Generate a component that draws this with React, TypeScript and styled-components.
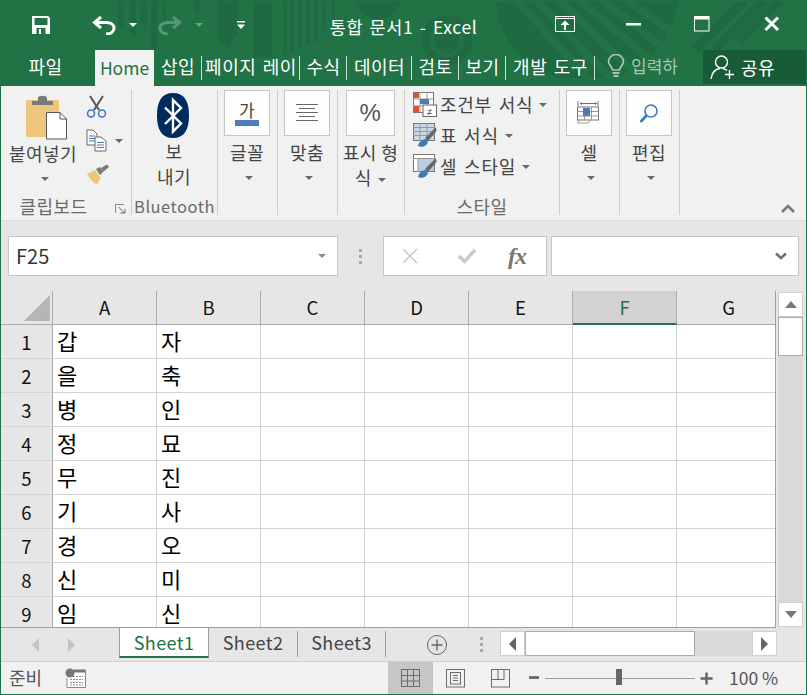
import React from "react";
import styled, { createGlobalStyle } from "styled-components";

const KR = `"Noto Sans CJK KR", "Noto Sans", sans-serif`;

const Global = createGlobalStyle`
  html, body { margin: 0; padding: 0; background: #fff; }
  * { box-sizing: border-box; }
`;

const Window = styled.div`
  width: 807px; height: 695px; border: 1px solid #217346; background: #e6e6e6;
  font-family: ${KR}; overflow: hidden; display: flex; flex-direction: column;
`;
const Header = styled.div`
  position: relative; height: 85px; background: #217346; flex: none;
`;
const Deco = styled.svg`
  position: absolute; left: -1px; top: -1px; pointer-events: none;
`;
const TitleBar = styled.div`
  position: relative; height: 49px; display: flex; align-items: center; color: #fff;
`;
const QuickSlot = styled.div<{ $w: number; $pl?: number }>`
  flex: none; width: ${p => p.$w}px; padding-left: ${p => p.$pl ?? 0}px; display: flex; align-items: center; justify-content: center;
`;
const Quick = styled.div`
  flex: none; width: 291px; display: flex; align-items: center; padding-bottom: 2px;
`;
const Title = styled.div`
  flex: 1; text-align: center; font-size: 17.5px; line-height: 24px; padding: 3px 0 0 0; letter-spacing: 0.6px; word-spacing: 2px; white-space: nowrap;
`;
const WinButtons = styled.div`
  flex: none; width: 291px; display: flex; align-items: center; padding-bottom: 3px;
`;
const TabRow = styled.div`
  position: relative; height: 36px; display: flex; align-items: stretch; color: #fff; font-size: 18px; line-height: 32px; letter-spacing: 0.5px; word-spacing: 2px;
`;
const Tab = styled.div<{ $w: number; $sep?: boolean; $pr?: number }>`
  flex: none; width: ${p => p.$w}px; padding-right: ${p => p.$pr ?? 0}px; white-space: nowrap; overflow: hidden; text-align: center; position: relative;
  ${p => p.$sep ? `&::after { content: ""; position: absolute; right: 0; top: 6px; height: 24px; width: 1px; background: #c9dccf; }` : ""}
`;
const HomeTab = styled.div`
  flex: none; width: 59px; background: #f1f1f1; color: #217346; text-align: center; font-size: 17.5px; line-height: 36px; letter-spacing: 0;
`;
const Tell = styled.div`
  flex: none; width: 108px; display: flex; align-items: center; gap: 6px; padding: 0 0 4px 12px; color: #a6c7b3; font-size: 17px; white-space: nowrap; letter-spacing: 0;
`;
const Share = styled.div`
  flex: none; width: 103px; height: 34px; background: #185c37; display: flex; align-items: center; gap: 5px; padding-left: 7px; font-size: 18px;
`;
const Ribbon = styled.div`
  height: 135px; flex: none; background: #f1f1f1; border-bottom: 1px solid #dcdcdc; padding-top: 4px; display: flex; align-items: flex-start;
`;
const Group = styled.div<{ $w: number }>`
  position: relative; flex: none; width: ${p => p.$w}px; height: 125px; border-right: 1px solid #cdcdcd;
  display: flex; flex-direction: column; align-items: center; color: #444; font-size: 18px; line-height: 25px; letter-spacing: 0.5px;
`;
const GroupBody = styled.div`
  flex: 1; display: flex; flex-direction: column; align-items: center; width: 100%; min-height: 0; padding-right: 1px;
`;
const GroupLabel = styled.div<{ $mr?: number; $fs?: number }>`
  flex: none; height: 24px; line-height: 24px; margin: 0 ${p => p.$mr ?? 0}px -3px 0; color: #6b6b6b; font-size: ${p => p.$fs ?? 18}px; white-space: nowrap;
`;
const BigBox = styled.div<{ $w?: number }>`
  flex: none; width: ${p => p.$w ?? 46}px; height: 46px; border: 1px solid #c6c6c6; background: #fdfdfd;
  display: flex; align-items: center; justify-content: center; margin-bottom: 4px;
`;
const BtnText = styled.div`
  white-space: nowrap; text-align: center;
`;
const CaretSlot = styled.div`
  height: 25px; padding-left: 4px; display: flex; align-items: center; justify-content: center;
`;
const Caret = styled.span<{ $c?: string; $m?: number }>`
  display: inline-block; width: 0; height: 0; margin-left: ${p => p.$m ?? 0}px; vertical-align: middle;
  border-left: 4px solid transparent; border-right: 4px solid transparent; border-top: 4px solid ${p => p.$c ?? "#6a6a6a"};
`;
const ClipBody = styled.div`
  flex: 1; width: 100%; display: flex; padding-left: 7px;
`;
const PasteCol = styled.div`
  flex: none; width: 70px; display: flex; flex-direction: column; align-items: center; padding-top: 5px;
`;
const PasteIcon = styled.svg`
  flex: none; margin: 0 0 1px 7px;
`;
const SmallCol = styled.div`
  flex: none; display: flex; flex-direction: column; padding: 5px 0 0 8px; gap: 11px;
`;
const SmallRow = styled.div`
  display: flex; align-items: center; gap: 8px; height: 23px;
`;
const Launcher = styled.svg`
  position: absolute; right: 5px; bottom: 1px;
`;
const BtIcon = styled.svg`
  flex: none; margin: 3px 2px 1px 0;
`;
const StyleBody = styled.div`
  flex: 1; width: 100%; display: flex; flex-direction: column; padding-left: 8px; margin-top: -1px;
`;
const StyleRow = styled.div`
  height: 31px; display: flex; align-items: center; gap: 3px; white-space: nowrap; color: #444; letter-spacing: 0.75px; word-spacing: 2px;
`;
const RowCaret = styled(Caret)`
  margin-left: 3px;
`;
const RibbonEnd = styled.div`
  flex: 1; height: 125px; display: flex; align-items: flex-end; justify-content: flex-end; padding: 0 11px 2px 0;
`;
const FormulaRow = styled.div`
  height: 70px; flex: none; padding: 15px 6px 15px 7px; display: flex; align-items: stretch;
`;
const FieldBox = styled.div<{ $w: number; $ml?: number }>`
  flex: none; width: ${p => p.$w}px; margin-left: ${p => p.$ml ?? 0}px; background: #fff; border: 1px solid #c6c6c6;
  display: flex; align-items: center; justify-content: space-between;
`;
const NameText = styled.div`
  color: #333; font-size: 20px; padding-left: 7px; line-height: 40px;
`;
const FieldEnd = styled.div`
  padding-right: 11px; display: flex; align-items: center;
`;
const Dots = styled.div`
  flex: none; width: 45px; display: flex; flex-direction: column; align-items: center; justify-content: center; gap: 3px;
`;
const Dot = styled.span`
  width: 3px; height: 3px; background: #a9a9a9; display: block;
`;
const FxGroup = styled.div`
  display: flex; width: 100%; align-items: center; padding-left: 17px; gap: 38px;
`;
const Fx = styled.span`
  font-family: "Liberation Serif", serif; font-style: italic; font-weight: bold; color: #777; font-size: 24px; line-height: 24px; margin-left: -7px; letter-spacing: -1px;
`;
const SheetArea = styled.div`
  height: 336px; flex: none; display: flex;
`;
const GridWrap = styled.div`
  width: 775px; flex: none; overflow: hidden; border-right: 1px solid #9f9f9f; background: #fff;
`;
const Grid = styled.div`
  width: 780px; display: grid; grid-template-columns: 52px repeat(7, 104px); grid-auto-rows: 34px;
`;
const Corner = styled.div`
  background: #e6e6e6; border-right: 1px solid #ababab; border-bottom: 1px solid #ababab; display: flex; align-items: flex-end; justify-content: flex-end; padding: 0 2px 3px 0;
`;
const ColHead = styled.div<{ $active?: boolean }>`
  background: ${p => p.$active ? "#d2d2d2" : "#e6e6e6"};
  color: ${p => p.$active ? "#217346" : "#111"};
  border-right: 1px solid #ababab;
  border-bottom: ${p => p.$active ? "2px solid #217346" : "1px solid #ababab"};
  text-align: center; font-size: 18.5px; line-height: 32px;
`;
const RowHead = styled.div`
  background: #e6e6e6; border-right: 1px solid #ababab; border-bottom: 1px solid #d4d4d4; color: #111; text-align: center; font-size: 18.5px; line-height: 35px;
`;
const Cell = styled.div`
  background: #fff; border-right: 1px solid #d4d4d4; border-bottom: 1px solid #d4d4d4; color: #000; font-size: 22px; line-height: 30px; padding-left: 4px;
`;
const VScroll = styled.div`
  width: 30px; flex: none; padding: 1px 0 0 2px; display: flex; flex-direction: column;
`;
const ScrollBtn = styled.div`
  flex: none; width: 25px; height: 25px; background: #fff; border: 1px solid #cfcfcf; display: flex; align-items: center; justify-content: center;
`;
const VTrack = styled.div`
  flex: 1; width: 25px; background: #d9d9d9;
`;
const VThumb = styled.div`
  width: 25px; height: 39px; background: #fff; border: 1px solid #ababab;
`;
const TabBar = styled.div`
  height: 34px; flex: none; border-top: 1px solid #9f9f9f; display: flex; align-items: flex-start; width: 775px;
`;
const NavArea = styled.div`
  flex: none; width: 118px; height: 33px; display: flex; align-items: center; gap: 27px; padding: 0 0 0 30px;
`;
const SheetTab = styled.div<{ $active?: boolean; $w: number }>`
  flex: none; width: ${p => p.$w}px; height: ${p => p.$active ? 30 : 26}px; margin-top: ${p => p.$active ? 0 : 3}px;
  background: ${p => p.$active ? "#fff" : "transparent"};
  color: ${p => p.$active ? "#217346" : "#444"};
  border-left: ${p => p.$active ? "1px solid #9f9f9f" : "none"};
  border-right: 1px solid #9f9f9f;
  border-bottom: ${p => p.$active ? "2px solid #217346" : "none"};
  font-size: 18px; text-align: center; line-height: ${p => p.$active ? 28 : 22}px; letter-spacing: 0.4px;
`;
const AddSlot = styled.div`
  flex: none; width: 62px; height: 33px; display: flex; align-items: center; justify-content: flex-end;
`;
const DotSlot = styled.div`
  flex: none; width: 52px; height: 33px; padding-left: 14px; display: flex; flex-direction: column; align-items: center; justify-content: center; gap: 3px;
`;
const HScroll = styled.div`
  flex: none; width: 277px; height: 25px; margin-top: 3px; display: flex;
`;
const HThumb = styled.div`
  flex: none; width: 170px; height: 25px; background: #fff; border: 1px solid #ababab;
`;
const HTrack = styled.div`
  flex: 1; background: #d9d9d9;
`;
const Status = styled.div`
  height: 33px; flex: none; background: #f1f1f1; border-top: 1px solid #cfcfcf; display: flex; align-items: stretch; color: #555; font-size: 18px;
`;
const ReadyText = styled.div`
  flex: none; width: 64px; padding-left: 8px; line-height: 30px;
`;
const StatusIconSlot = styled.div<{ $w: number; $bg?: string }>`
  flex: none; width: ${p => p.$w}px; display: flex; align-items: center; justify-content: center; background: ${p => p.$bg ?? "transparent"};
`;
const StatusSpacer = styled.div`
  flex: none; width: 302px;
`;
const ZoomTrack = styled.div`
  flex: none; width: 150px; margin-left: 5px; position: relative; display: flex; align-items: center;
`;
const ZoomLine = styled.div`
  width: 100%; height: 1px; background: #9a9a9a;
`;
const ZoomThumb = styled.div`
  position: absolute; left: 71px; top: 7px; width: 6px; height: 16px; background: #666;
`;
const ZoomPct = styled.div`
  flex: none; margin-left: 15px; line-height: 31px; font-size: 17.5px; white-space: nowrap;
`;
const FontIcon = styled.div`
  width: 24px; display: flex; flex-direction: column; align-items: center;
`;
const FontGlyph = styled.div`
  font-size: 17px; line-height: 20px; color: #444;
`;
const FontBar = styled.div`
  width: 24px; height: 6px; background: #4a7eb8;
`;
const Percent = styled.span`
  font-family: "Liberation Sans", sans-serif; font-size: 24px; color: #555; line-height: 30px;
`;

const Icon = {
  Save: () => (<svg width="20" height="20" viewBox="0 0 20 20"><path d="M1 1h16l2 2v16H1z" fill="#fff"/><rect x="3.5" y="3" width="13" height="7" fill="#217346"/><path d="M5.5 13h9v6h-9z" fill="#217346"/><rect x="8" y="14" width="2" height="5" fill="#fff"/></svg>),
  Undo: () => (<svg width="24" height="20" viewBox="0 0 24 20"><path d="M9 2 L2.5 7.5 L9 13" fill="none" stroke="#fff" strokeWidth="3"/><path d="M3 7.5 H15 C25 8 24 19 14 19" fill="none" stroke="#fff" strokeWidth="3"/></svg>),
  Redo: () => (<svg width="24" height="20" viewBox="0 0 24 20" opacity="0.25"><path d="M15 2 L21.5 7.5 L15 13" fill="none" stroke="#fff" strokeWidth="3"/><path d="M21 7.5 H9 C-1 8 0 19 10 19" fill="none" stroke="#fff" strokeWidth="3"/></svg>),
  Custom: () => (<svg width="10" height="8" viewBox="0 0 10 8"><rect x="1" width="8" height="1.5" fill="#fff"/><path d="M1 3.5h8L5 8z" fill="#fff"/></svg>),
  Display: () => (<svg width="20" height="16" viewBox="0 0 20 16"><rect x="0.5" y="0.5" width="19" height="15" fill="none" stroke="#fff"/><line x1="0" y1="2.5" x2="20" y2="2.5" stroke="#fff"/><path d="M10 4.5 L14.5 9 H11 V14 H9 V9 H5.5z" fill="#fff"/></svg>),
  Min: () => (<svg width="16" height="4" viewBox="0 0 16 4"><rect width="15" height="2.5" y="1" fill="#fff"/></svg>),
  Max: () => (<svg width="16" height="16" viewBox="0 0 16 16"><rect x="0.5" y="0.5" width="14.5" height="14.5" fill="none" stroke="#fff"/><rect width="15" height="3.5" fill="#fff"/></svg>),
  Close: () => (<svg width="16" height="16" viewBox="0 0 16 16"><path d="M1.5 1.5 L14 14 M14 1.5 L1.5 14" stroke="#fff" strokeWidth="3"/></svg>),
  Bulb: () => (<svg width="18" height="24" viewBox="0 0 18 24" fill="none"><path d="M5.5 16 C5 12 1.5 11.5 1.5 7.5 A7.5 7 0 0 1 16.5 7.5 C16.5 11.5 13 12 12.5 16 Z" stroke="#a6c7b3" strokeWidth="1.6"/><rect x="5.5" y="18" width="7" height="2" fill="#a6c7b3"/><rect x="6.5" y="21" width="5" height="2" fill="#a6c7b3"/></svg>),
  User: () => (<svg width="26" height="26" viewBox="0 0 26 26" fill="none"><circle cx="11.5" cy="8" r="6" stroke="#fff" strokeWidth="1.4"/><path d="M1 25 C2 18 6 15 10 14.5" stroke="#fff" strokeWidth="1.4"/><path d="M13 14.5 C15 15 16 15.5 17 16.5" stroke="#fff" strokeWidth="1.4"/><path d="M19.5 16 V25 M15 20.5 H24" stroke="#fff" strokeWidth="1.4"/></svg>),
  Paste: () => (<PasteIcon width="43" height="45" viewBox="0 0 43 45"><rect x="1" y="5" width="33" height="37" rx="2" fill="#edc67b"/><path d="M7 10 V6 H13 V3 C13 0 22 0 22 3 V6 H28 V10z" fill="#7a7a7a"/><path d="M21.5 17.5 H35 L41.5 24 V44 H21.5z" fill="#fff" stroke="#555" strokeWidth="1"/><path d="M35 17.5 V24 H41.5" fill="none" stroke="#555"/></PasteIcon>),
  Scissors: () => (<svg width="21" height="23" viewBox="0 0 21 23" fill="none"><path d="M4 1 L13 15 M17 1 L8 15" stroke="#555" strokeWidth="2"/><circle cx="5" cy="18.5" r="3.5" stroke="#3d7ab8" strokeWidth="1.6"/><circle cx="16" cy="18.5" r="3.5" stroke="#3d7ab8" strokeWidth="1.6"/></svg>),
  Copy: () => (<svg width="21" height="23" viewBox="0 0 21 23" fill="none"><path d="M1 1 H7 L11 5 V16 H1z" fill="#fff" stroke="#666"/><path d="M3 7h6M3 9.5h6M3 12h6" stroke="#3d7ab8"/><path d="M9 8 H15 L20 12 V22 H9z" fill="#fff" stroke="#666"/><path d="M11 13.5h7M11 16h7M11 18.5h7" stroke="#3d7ab8"/></svg>),
  Brush: () => (<svg width="24" height="21" viewBox="0 0 24 21"><path d="M1 10 L9 6 L15 14 L11 20 C8 20 4 15 1 10z" fill="#edc67b"/><path d="M10 5 L14 3 L17 8 L14 11z" fill="#777"/><path d="M15 4 L21 0.5 L23 3 L17 8z" fill="#777"/></svg>),
  Launch: () => (<Launcher width="11" height="10" viewBox="0 0 11 10" fill="none"><path d="M0.5 9 V0.5 H9" stroke="#8a8a8a"/><path d="M3.5 3 L9.5 9 M5.5 9 H10 V5" stroke="#666"/></Launcher>),
  Bluetooth: () => (<BtIcon width="34" height="45" viewBox="0 0 34 45"><path d="M17 0 C28 0 33 8 33 22.5 C33 37 28 45 17 45 C6 45 1 37 1 22.5 C1 8 6 0 17 0z" fill="#002b5c"/><path d="M9 14.5 L25 30.5 L17 38.5 V7 L25 15 L9 31" fill="none" stroke="#fff" strokeWidth="2.4"/></BtIcon>),
  Font: () => (<FontIcon><FontGlyph>가</FontGlyph><FontBar /></FontIcon>),
  Align: () => (<svg width="24" height="20" viewBox="0 0 24 20"><path d="M1 1.5h22M4 5.5h16M1 9.5h22M4 13.5h16M1 17.5h22" stroke="#666" strokeWidth="1"/></svg>),
  Cond: () => (<svg width="24" height="25" viewBox="0 0 24 25"><rect x="0.5" y="0.5" width="20" height="20" fill="#fff" stroke="#777"/><path d="M7 0v20M14 0v20M0 7h20M0 14h20" stroke="#999"/><rect x="1" y="1" width="5" height="5" fill="#d8552f"/><rect x="7" y="7" width="9" height="5" fill="#4a7eb8"/><rect x="1" y="14" width="5" height="6" fill="#d8552f"/><rect x="10" y="13" width="13.5" height="11.5" fill="#fff" stroke="#666"/><text x="17" y="23" fontSize="9" fontFamily="Liberation Sans" textAnchor="middle" fill="#333">≠</text></svg>),
  Table: () => (<svg width="24" height="25" viewBox="0 0 24 25"><rect x="0.5" y="0.5" width="21" height="17" fill="#c7d6e6" stroke="#777"/><path d="M0 4.5h22M0 8.5h22M0 12.5h22M7 0v18M14 0v18" stroke="#999"/><path d="M23 4 L12 15 L15 18 L23.5 8z" fill="#666"/><path d="M5 23 C6 18 10 16 13 16 L15 19 C14 23 9 25 5 23z" fill="#3d7ab8"/></svg>),
  CellStyle: () => (<svg width="24" height="25" viewBox="0 0 24 25"><rect x="0.5" y="0.5" width="21" height="17" fill="#fff" stroke="#777"/><rect x="5" y="5" width="16" height="12" fill="#b9cde2"/><path d="M0 4.5h22M5 5v13" stroke="#999"/><path d="M23 4 L12 15 L15 18 L23.5 8z" fill="#666"/><path d="M5 23 C6 18 10 16 13 16 L15 19 C14 23 9 25 5 23z" fill="#3d7ab8"/></svg>),
  Cells: () => (<svg width="24" height="24" viewBox="0 0 24 24"><path d="M1 0v5M21 0v5M3 2.5h17" stroke="#3d7ab8" fill="none"/><path d="M3 2.5l2-1.5v3zM20 2.5l-2-1.5v3z" fill="#3d7ab8"/><rect x="0.5" y="6" width="21" height="13" fill="#fff" stroke="#777"/><path d="M0.5 10.5h21M0.5 15h21M7.5 6v13M14.5 6v13" stroke="#999"/><rect x="6" y="7" width="7" height="8" fill="#4a7eb8"/><path d="M1 19v3h10l3-3" stroke="#999" fill="none"/></svg>),
  Search: () => (<svg width="20" height="21" viewBox="0 0 20 21" fill="none"><circle cx="12" cy="8" r="6" stroke="#3d7ab8" strokeWidth="1.6"/><path d="M7.5 12.5 L1.5 19" stroke="#3d7ab8" strokeWidth="2.6"/></svg>),
  Chevron: () => (<svg width="14" height="9" viewBox="0 0 14 9"><path d="M1 8 L7 2 L13 8" fill="none" stroke="#777" strokeWidth="2.6"/></svg>),
  X: () => (<svg width="18" height="16" viewBox="0 0 18 16"><path d="M2 1 L16 15 M16 1 L2 15" stroke="#c9c9c9" strokeWidth="1.6"/></svg>),
  Check: () => (<svg width="20" height="16" viewBox="0 0 20 16"><path d="M2 8 L7.5 13.5 L18 2" fill="none" stroke="#c9c9c9" strokeWidth="3.4"/></svg>),
  DownFat: () => (<svg width="12" height="8" viewBox="0 0 12 8"><path d="M1 1.5 L6 6 L11 1.5" fill="none" stroke="#6f6f6f" strokeWidth="2.6"/></svg>),
  Tri: ({ d, c = "#777" }: { d: "l" | "r" | "u" | "d"; c?: string }) => {
    const p = { l: "M8 0 V14 L1 7z", r: "M1 0 V14 L8 7z", u: "M0 8 H12 L6 1z", d: "M0 1 H12 L6 8z" }[d];
    return d === "l" || d === "r"
      ? <svg width="9" height="14" viewBox="0 0 9 14"><path d={p} fill={c} /></svg>
      : <svg width="12" height="9" viewBox="0 0 12 9"><path d={p} fill={c} /></svg>;
  },
  Triangle: () => (<svg width="26" height="26" viewBox="0 0 26 26"><path d="M26 0 V26 H0z" fill="#b5b5b5"/></svg>),
  Add: () => (<svg width="22" height="22" viewBox="0 0 22 22" fill="none"><circle cx="11" cy="11" r="9.5" stroke="#666"/><path d="M11 5.5v11M5.5 11h11" stroke="#666" strokeWidth="1.4"/></svg>),
  Macro: () => (<svg width="21" height="20" viewBox="0 0 21 20"><path d="M9 2.5h11.5V19.5H2V10" fill="#fff" stroke="#888"/><circle cx="5" cy="5" r="4.5" fill="#777"/><rect x="8.5" y="1.5" width="12" height="3" fill="#777"/><path d="M5 8.5h13M5 11.5h13M5 14.5h13M5 17h13" stroke="#888" strokeDasharray="2 1"/></svg>),
  Normal: () => (<svg width="20" height="19" viewBox="0 0 20 19" fill="none"><rect x="0.5" y="0.5" width="18" height="17" stroke="#6c6c6c"/><path d="M0 6.5h19M0 12h19M6.5 0v18M12.5 0v18" stroke="#6c6c6c"/></svg>),
  Page: () => (<svg width="20" height="19" viewBox="0 0 20 19" fill="none"><rect x="0.5" y="0.5" width="18" height="17.5" stroke="#6c6c6c"/><rect x="4.5" y="3.5" width="10" height="11.5" stroke="#6c6c6c"/><path d="M7 6.5h5M7 9h5M7 11.5h5" stroke="#6c6c6c"/></svg>),
  Break: () => (<svg width="20" height="19" viewBox="0 0 20 19" fill="none"><rect x="0.5" y="0.5" width="18" height="17.5" stroke="#6c6c6c"/><path d="M0.5 10.5h12.5V0.5M7 0.5v10" stroke="#6c6c6c"/></svg>),
  Minus: () => (<svg width="12" height="4" viewBox="0 0 12 4"><rect width="11" height="3" fill="#666"/></svg>),
  Plus: () => (<svg width="15" height="15" viewBox="0 0 15 15"><path d="M7 1v13M0.5 7.5h13" stroke="#666" strokeWidth="2.6"/></svg>),
};

const Decoration = () => (
  <Deco width="807" height="86" viewBox="0 0 807 86">
    <g fill="#1f6a40">
      <path d="M118 0h6v28h-6zM130 0h6v36h-6zM140 0h7v25h-7zM151 0h6v50h-6zM163 0h3v20h-3z"/>
      <path d="M192 0h10l-5 18z"/>
      <path d="M218 0h20v34l-10 12-10-6z"/>
      <path d="M253 0h19v57h-19z"/>
      <path d="M283 0h4v55h-4zM290 0h4v53h-4zM298 0h4v48h-4zM306 0h4v45h-4zM314 0h4v42h-4zM322 0h3v30h-3zM332 0h3v20h-3z"/>
      <path d="M355 0h46c-3 12-12 19-23 19s-20-7-23-19z"/>
      <circle cx="447" cy="40" r="25"/>
      <path d="M496 0H677C677 40 640 78 600 78H560C520 70 496 30 496 0z"/>
    </g>
    <g fill="none" stroke="#217346">
      <circle cx="447" cy="40" r="15" strokeWidth="5"/>
      <path d="M516 0 L590 80M536 0 L612 80M558 0 L634 72M580 0 L650 60M602 0 L664 48M626 0 L672 32" strokeWidth="8"/>
    </g>
    <g fill="none" stroke="#1f6a40">
      <path d="M695 50 L745 0M715 50 L765 0M738 42 L780 0" strokeWidth="9"/>
    </g>
  </Deco>
);

const rows = [["갑", "자"], ["을", "축"], ["병", "인"], ["정", "묘"], ["무", "진"], ["기", "사"], ["경", "오"], ["신", "미"], ["임", "신"]];
const cols = ["A", "B", "C", "D", "E", "F", "G"];

export default function App() {
  return (
    <Window>
      <Global />
      <Header>
        <Decoration />
        <TitleBar>
          <Quick>
            <QuickSlot $w={79}><Icon.Save /></QuickSlot>
            <QuickSlot $w={47}><Icon.Undo /></QuickSlot>
            <QuickSlot $w={12}><Caret $c="#fff" /></QuickSlot>
            <QuickSlot $w={54} $pl={8}><Icon.Redo /></QuickSlot>
            <QuickSlot $w={12}><Caret $c="#6ba283" /></QuickSlot>
            <QuickSlot $w={72}><Icon.Custom /></QuickSlot>
          </Quick>
          <Title>통합 문서1 - Excel</Title>
          <WinButtons>
            <QuickSlot $w={40} />
            <QuickSlot $w={20}><Icon.Display /></QuickSlot>
            <QuickSlot $w={51} />
            <QuickSlot $w={16}><Icon.Min /></QuickSlot>
            <QuickSlot $w={52} />
            <QuickSlot $w={16}><Icon.Max /></QuickSlot>
            <QuickSlot $w={54} />
            <QuickSlot $w={16}><Icon.Close /></QuickSlot>
          </WinButtons>
        </TitleBar>
        <TabRow>
          <Tab $w={94} $pr={5}>파일</Tab>
          <HomeTab>Home</HomeTab>
          <Tab $w={48} $sep>삽입</Tab>
          <Tab $w={98} $sep>페이지 레이</Tab>
          <Tab $w={47} $sep>수식</Tab>
          <Tab $w={65} $sep>데이터</Tab>
          <Tab $w={47} $sep>검토</Tab>
          <Tab $w={47} $sep>보기</Tab>
          <Tab $w={89} $sep>개발 도구</Tab>
          <Tell><Icon.Bulb />입력하</Tell>
          <Share><Icon.User />공유</Share>
        </TabRow>
      </Header>
      <Ribbon>
        <Group $w={131}>
          <ClipBody>
            <PasteCol>
              <Icon.Paste />
              <BtnText>붙여넣기</BtnText>
              <CaretSlot><Caret /></CaretSlot>
            </PasteCol>
            <SmallCol>
              <SmallRow><Icon.Scissors /></SmallRow>
              <SmallRow><Icon.Copy /><Caret /></SmallRow>
              <SmallRow><Icon.Brush /></SmallRow>
            </SmallCol>
          </ClipBody>
          <GroupLabel $mr={25}>클립보드</GroupLabel>
          <Icon.Launch />
        </Group>
        <Group $w={86}>
          <GroupBody>
            <Icon.Bluetooth />
            <BtnText>보</BtnText>
            <BtnText>내기</BtnText>
          </GroupBody>
          <GroupLabel $fs={16.5}>Bluetooth</GroupLabel>
        </Group>
        <Group $w={60}>
          <GroupBody>
            <BigBox><Icon.Font /></BigBox>
            <BtnText>글꼴</BtnText>
            <CaretSlot><Caret /></CaretSlot>
          </GroupBody>
        </Group>
        <Group $w={60}>
          <GroupBody>
            <BigBox><Icon.Align /></BigBox>
            <BtnText>맞춤</BtnText>
            <CaretSlot><Caret /></CaretSlot>
          </GroupBody>
        </Group>
        <Group $w={67}>
          <GroupBody>
            <BigBox $w={49}><Percent>%</Percent></BigBox>
            <BtnText>표시 형</BtnText>
            <BtnText>식 <Caret $m={2} /></BtnText>
          </GroupBody>
        </Group>
        <Group $w={155}>
          <StyleBody>
            <StyleRow><Icon.Cond />조건부 서식<RowCaret /></StyleRow>
            <StyleRow><Icon.Table />표 서식<RowCaret /></StyleRow>
            <StyleRow><Icon.CellStyle />셀 스타일<RowCaret /></StyleRow>
          </StyleBody>
          <GroupLabel>스타일</GroupLabel>
        </Group>
        <Group $w={60}>
          <GroupBody>
            <BigBox><Icon.Cells /></BigBox>
            <BtnText>셀</BtnText>
            <CaretSlot><Caret /></CaretSlot>
          </GroupBody>
        </Group>
        <Group $w={60}>
          <GroupBody>
            <BigBox><Icon.Search /></BigBox>
            <BtnText>편집</BtnText>
            <CaretSlot><Caret /></CaretSlot>
          </GroupBody>
        </Group>
        <RibbonEnd><Icon.Chevron /></RibbonEnd>
      </Ribbon>
      <FormulaRow>
        <FieldBox $w={330}>
          <NameText>F25</NameText>
          <FieldEnd><Caret $c="#8a8a8a" /></FieldEnd>
        </FieldBox>
        <Dots><Dot /><Dot /><Dot /></Dots>
        <FieldBox $w={164}>
          <FxGroup><Icon.X /><Icon.Check /><Fx>fx</Fx></FxGroup>
        </FieldBox>
        <FieldBox $w={248} $ml={4}>
          <span />
          <FieldEnd><Icon.DownFat /></FieldEnd>
        </FieldBox>
      </FormulaRow>
      <SheetArea>
        <GridWrap>
          <Grid>
            <Corner><Icon.Triangle /></Corner>
            {cols.map(c => <ColHead key={c} $active={c === "F"}>{c}</ColHead>)}
            {rows.map((r, i) => (
              <React.Fragment key={i}>
                <RowHead>{i + 1}</RowHead>
                {cols.map((c, j) => <Cell key={c}>{r[j] ?? ""}</Cell>)}
              </React.Fragment>
            ))}
          </Grid>
        </GridWrap>
        <VScroll>
          <ScrollBtn><Icon.Tri d="u" /></ScrollBtn>
          <VThumb />
          <VTrack />
          <ScrollBtn><Icon.Tri d="d" /></ScrollBtn>
        </VScroll>
      </SheetArea>
      <TabBar>
        <NavArea><Icon.Tri d="l" c="#c4c4c4" /><Icon.Tri d="r" c="#c4c4c4" /></NavArea>
        <SheetTab $active $w={90}>Sheet1</SheetTab>
        <SheetTab $w={89}>Sheet2</SheetTab>
        <SheetTab $w={88}>Sheet3</SheetTab>
        <AddSlot><Icon.Add /></AddSlot>
        <DotSlot><Dot /><Dot /><Dot /></DotSlot>
        <HScroll>
          <ScrollBtn><Icon.Tri d="l" c="#666" /></ScrollBtn>
          <HThumb />
          <HTrack />
          <ScrollBtn><Icon.Tri d="r" c="#666" /></ScrollBtn>
        </HScroll>
      </TabBar>
      <Status>
        <ReadyText>준비</ReadyText>
        <StatusIconSlot $w={21}><Icon.Macro /></StatusIconSlot>
        <StatusSpacer />
        <StatusIconSlot $w={45} $bg="#c6c6c6"><Icon.Normal /></StatusIconSlot>
        <StatusIconSlot $w={13} />
        <StatusIconSlot $w={20}><Icon.Page /></StatusIconSlot>
        <StatusIconSlot $w={25} />
        <StatusIconSlot $w={20}><Icon.Break /></StatusIconSlot>
        <StatusIconSlot $w={18} />
        <StatusIconSlot $w={11}><Icon.Minus /></StatusIconSlot>
        <ZoomTrack><ZoomLine /><ZoomThumb /></ZoomTrack>
        <StatusIconSlot $w={5} />
        <StatusIconSlot $w={14}><Icon.Plus /></StatusIconSlot>
        <ZoomPct>100 %</ZoomPct>
      </Status>
    </Window>
  );
}
